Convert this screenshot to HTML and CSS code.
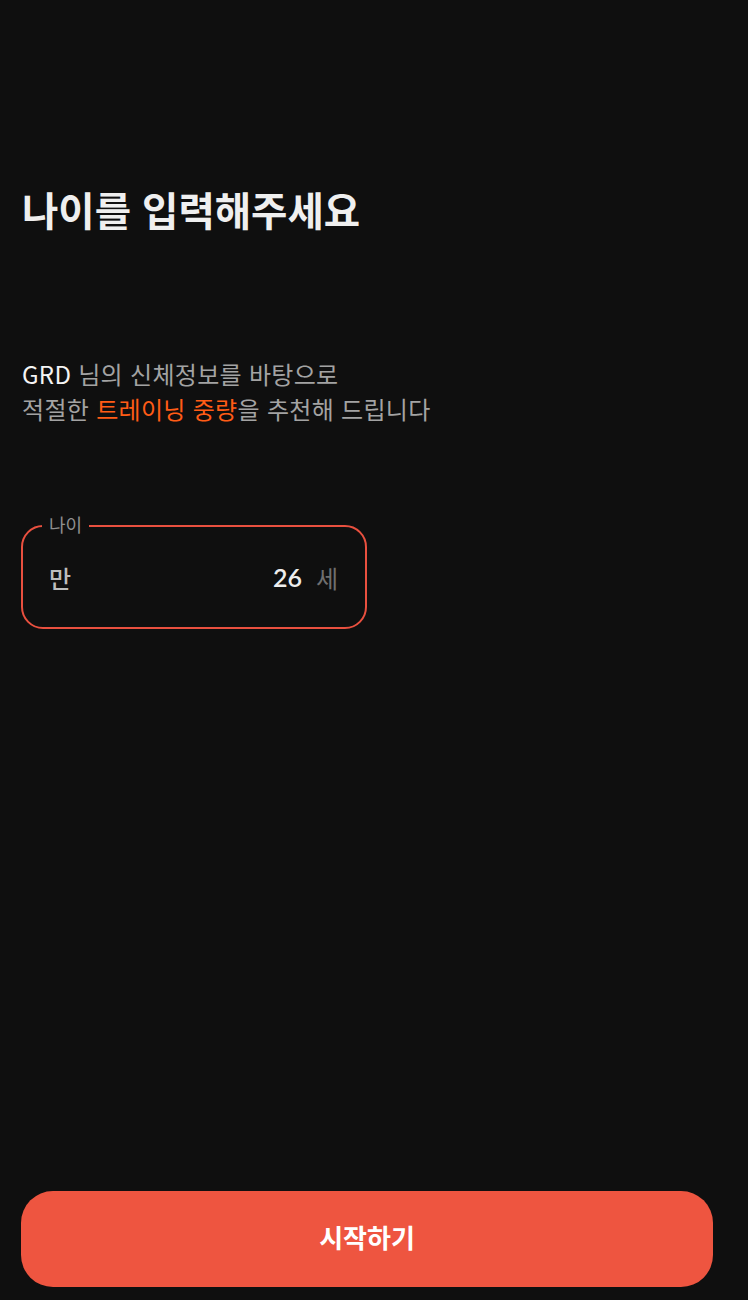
FILE: index.html
```html
<!DOCTYPE html>
<html lang="ko">
<head>
<meta charset="utf-8">
<link rel="stylesheet" href="styles.css">
</head>
<body>
<div class="screen">
  <h1 class="title">나이를 입력해주세요</h1>
  <p class="desc"><span class="name">GRD</span> 님의 신체정보를 바탕으로<br>적절한 <span class="accent">트레이닝 중량</span>을 추천해 드립니다</p>
  <div class="field">
    <span class="label">나이</span>
    <span class="prefix">만</span>
    <span class="value">26</span>
    <span class="unit">세</span>
  </div>
  <button class="start">시작하기</button>
</div>
</body>
</html>
```
FILE: styles.css
```css
html, body {
  margin: 0;
  padding: 0;
  background: #0f0f0f;
}
body {
  font-family: "Noto Sans CJK KR", "Noto Sans", sans-serif;
  color: #eeeeee;
}
.screen {
  height: 1300px;
  box-sizing: border-box;
  padding: 0 35px 13px 21px;
  display: flex;
  flex-direction: column;
}
.title {
  margin: 181px 0 0 1px;
  font-size: 39.5px;
  line-height: 56px;
  font-weight: 700;
  color: #efefef;
}
.desc {
  margin: 119px 0 0 1px;
  font-size: 24px;
  line-height: 35px;
  letter-spacing: 0.3px;
  color: #a3a3a3;
}
.name { color: #f4f4f4; }
.accent { color: #ff5c16; }
.field {
  position: relative;
  margin-top: 99px;
  width: 346px;
  height: 104px;
  box-sizing: border-box;
  border: 2px solid #e9503f;
  border-radius: 22px;
  padding: 0 27px 0 26px;
  display: flex;
  align-items: center;
}
.label {
  position: absolute;
  left: 19px;
  top: -15px;
  padding: 0 7px;
  background: #0f0f0f;
  font-size: 18px;
  line-height: 24px;
  color: #8f8f8f;
}
.prefix {
  font-size: 24px;
  color: #bdbdbd;
  font-weight: 500;
}
.value {
  margin-left: auto;
  font-family: "Lato", sans-serif;
  font-weight: 600;
  font-size: 25px;
  color: #ededed;
}
.unit {
  margin-left: 14px;
  font-size: 24px;
  color: #6f6f6f;
}
.start {
  margin-top: auto;
  height: 96px;
  width: 100%;
  border: none;
  border-radius: 32px;
  background: #ee5540;
  color: #ffffff;
  font-family: "Noto Sans CJK KR", sans-serif;
  font-size: 26px;
  font-weight: 700;
  line-height: 1;
  padding: 0 0 4px;
  cursor: pointer;
}
```
